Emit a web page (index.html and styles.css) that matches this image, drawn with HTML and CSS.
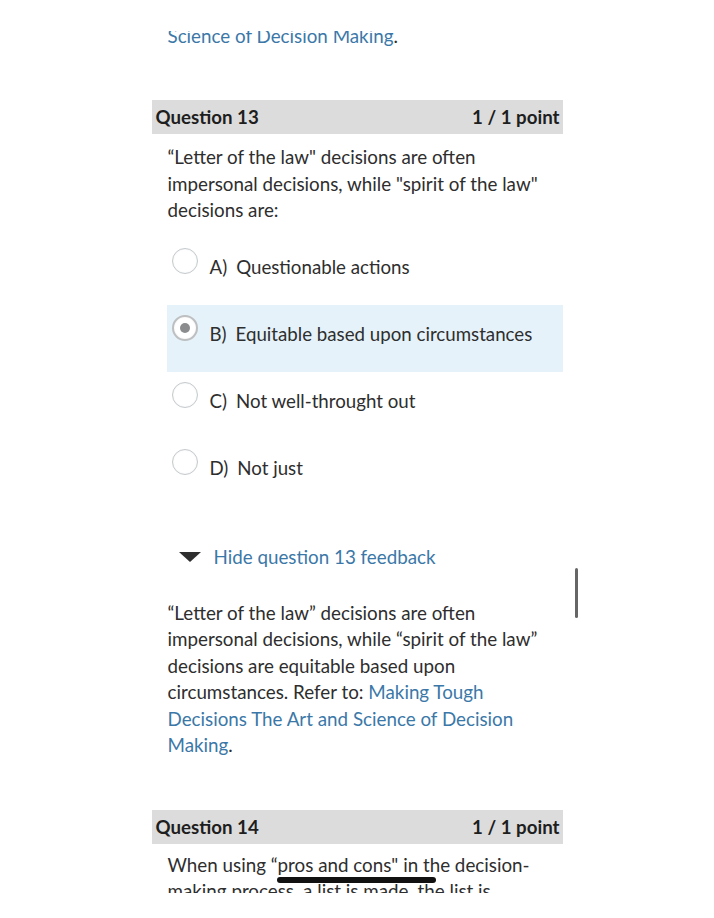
FILE: index.html
```html
<!DOCTYPE html>
<html lang="en">
<head>
  <meta charset="UTF-8" />
  <meta name="viewport" content="width=device-width, initial-scale=1.0"/>
  <title>Quiz Results</title>
  <link rel="stylesheet" href="styles.css">
</head>
<body>

  <div class="page">
    <div class="cut-top">
      <p class="feedback"><a href="#">Science of Decision Making</a>.</p>
    </div>

    <section class="question">
      <div class="q-head">
        <span>Question 13</span>
        <span>1 / 1 point</span>
      </div>
      <p class="q-text">&ldquo;Letter of the law" decisions are often impersonal decisions, while "spirit of the law" decisions are:</p>

      <div class="answers">
        <div class="answer">
          <span class="radio"></span>
          <span class="label"><span class="letter">A)</span>Questionable actions</span>
        </div>
        <div class="answer selected">
          <span class="radio"></span>
          <span class="label"><span class="letter">B)</span>Equitable based upon circumstances</span>
        </div>
        <div class="answer">
          <span class="radio"></span>
          <span class="label"><span class="letter">C)</span>Not well-throught out</span>
        </div>
        <div class="answer">
          <span class="radio"></span>
          <span class="label"><span class="letter">D)</span>Not just</span>
        </div>
      </div>

      <div class="toggle">
        <span class="caret"></span>
        <a href="#">Hide question 13 feedback</a>
        <span class="scrollbar"></span>
      </div>

      <p class="feedback">&ldquo;Letter of the law&rdquo; decisions are often impersonal decisions, while &ldquo;spirit of the law&rdquo; decisions are equitable based upon circumstances. Refer to: <a href="#">Making Tough Decisions The Art and Science of Decision Making</a>.</p>
    </section>

    <section class="question">
      <div class="q-head">
        <span>Question 14</span>
        <span>1 / 1 point</span>
      </div>
      <p class="q-text cut-bottom">When using &ldquo;<span class="marked">pros and cons</span>" in the decision-making process, a list is made, the list is</p>
    </section>
  </div>

</body>
</html>
```

FILE: styles.css
```css
body {
  font-family: Lato, 'Noto Sans', sans-serif;
  background: #fff;
  color: #2e2e2e;
  margin: 0;
}

.page {
  width: 411px;
  margin: 0 auto;
}

p {
  margin: 0;
}

a {
  color: #3b78a8;
  text-decoration: none;
}

.cut-top {
  margin-top: 31px;
  height: 18px;
  overflow: hidden;
}

.cut-top .feedback {
  margin-top: -8.5px;
}

.question {
  margin-top: 51px;
}

.q-head {
  display: flex;
  justify-content: space-between;
  background: #dcdcdc;
  height: 34px;
  line-height: 34px;
  padding: 0 3px 0 4px;
  font-size: 18.7px;
  font-weight: bold;
  color: #1e1e1e;
}

.q-text,
.feedback {
  font-size: 18.8px;
  line-height: 26.5px;
  padding: 0 8px 0 16px;
}

.q-text {
  margin-top: 10px;
}

.answers {
  margin-top: 14px;
}

.answer {
  display: flex;
  align-items: flex-start;
  height: 67px;
  box-sizing: border-box;
  margin-left: 15px;
  padding: 10px 0 0 5px;
  font-size: 18.7px;
}

.answer.selected {
  background: #e6f2fa;
}

.radio {
  flex: none;
  width: 24px;
  height: 24px;
  border: 1px solid #c4c9cc;
  border-radius: 50%;
  background: #fff;
  box-shadow: inset 0 0 2px rgba(0,0,0,0.08);
  margin-right: 12px;
  position: relative;
}

.selected .radio {
  width: 22px;
  height: 22px;
  border: 2px solid #bdbfc1;
}

.selected .radio::after {
  content: "";
  position: absolute;
  left: 6px;
  top: 6px;
  width: 10px;
  height: 10px;
  border-radius: 50%;
  background: #8a8c8e;
}

.label {
  margin-top: 6px;
  line-height: 26px;
}

.letter {
  margin-right: 9px;
}

.toggle {
  position: relative;
  display: flex;
  align-items: center;
  margin-top: 38px;
  height: 26px;
  padding-left: 27px;
  font-size: 18.8px;
}

.caret {
  width: 0;
  height: 0;
  border-left: 11px solid transparent;
  border-right: 11px solid transparent;
  border-top: 10px solid #2e2e2e;
  margin-right: 13px;
}

.scrollbar {
  position: absolute;
  left: 423px;
  top: 24px;
  width: 3px;
  height: 50px;
  border-radius: 2px;
  background: #666;
}

.question .feedback {
  margin-top: 30px;
}

.q-head + .q-text.cut-bottom {
  margin-top: 8px;
  height: 41px;
  overflow: hidden;
}

.marked {
  position: relative;
}

/* pen stroke drawn over the screenshot */
.marked::after {
  content: "";
  position: absolute;
  left: -1px;
  bottom: -7px;
  width: 159px;
  height: 6px;
  border-radius: 3px;
  background: #111;
}
```
